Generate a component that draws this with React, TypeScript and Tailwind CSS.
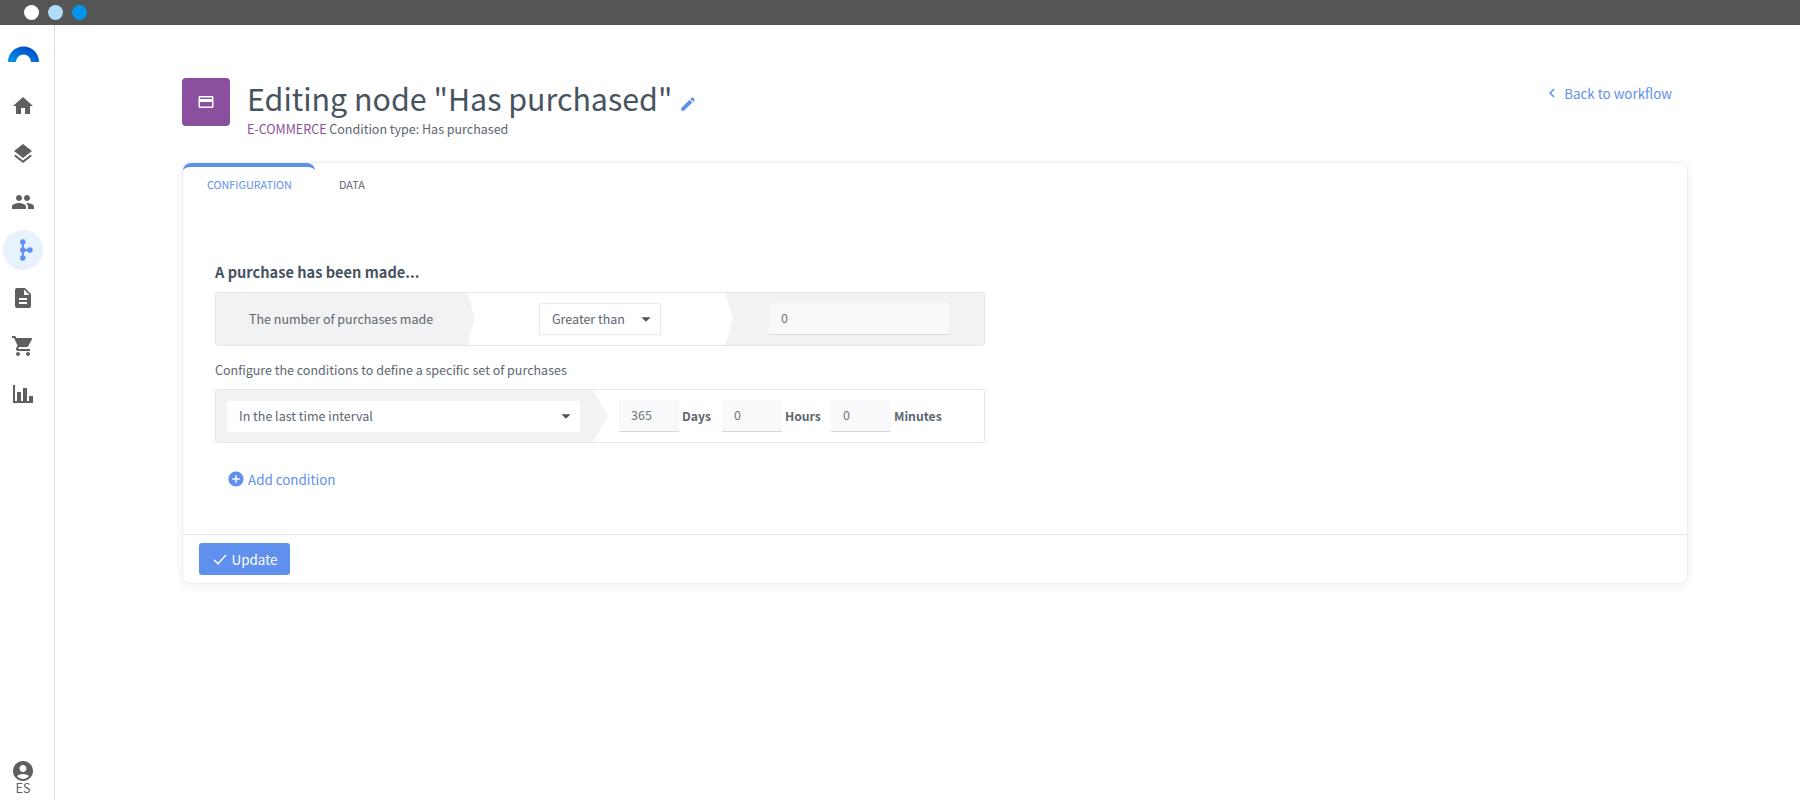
import { MdHome, MdLayers, MdPeople, MdDescription, MdShoppingCart, MdAccountCircle, MdCreditCard, MdEdit, MdAddCircle, MdArrowDropDown, MdChevronLeft } from "react-icons/md";

const font = "[font-family:'Noto_Sans_CJK_SC','Noto_Sans',sans-serif]";

function ChartIcon() {
  return (
    <svg viewBox="0 0 24 24" width="24" height="24" fill="currentColor">
      <path d="M22 21H2V3H4V19H6V10H10V19H12V6H16V19H18V14H22V21Z" />
    </svg>
  );
}

function FlowIcon() {
  return (
    <svg viewBox="0 0 24 24" width="24" height="24" fill="#5f90ee">
      <rect x="10.7" y="3" width="2.2" height="18" />
      <rect x="12" y="11" width="7" height="2.2" />
      <circle cx="11.8" cy="4" r="2.7" />
      <circle cx="11.8" cy="12" r="2.7" />
      <circle cx="11.8" cy="20" r="2.7" />
      <circle cx="19" cy="12" r="2.7" />
    </svg>
  );
}

function Logo() {
  return (
    <svg viewBox="0 0 31 16" width="31" height="16">
      <defs>
        <linearGradient id="lg" x1="0" y1="1" x2="1" y2="0">
          <stop offset="0" stopColor="#009be8" />
          <stop offset="1" stopColor="#0038c4" />
        </linearGradient>
      </defs>
      <path d="M0 16A15.5 15.5 0 0 1 31 16H23A7.5 7.5 0 0 0 8 16Z" fill="url(#lg)" />
    </svg>
  );
}

function NavItem({ children, active }: { children: React.ReactNode; active?: boolean }) {
  return (
    <div className={`flex h-10 w-10 items-center justify-center rounded-full ${active ? "bg-[#e8f2fd]" : ""}`}>
      {children}
    </div>
  );
}

function NumInput({ value, width }: { value: string; width: string }) {
  return (
    <div className={`flex h-8 items-center border-b border-[#d5d9de] bg-[#f8f9fb] pl-3 text-[12.5px] text-[#6c757d] ${width}`}>
      {value}
    </div>
  );
}

export default function App() {
  return (
    <div className={`flex h-screen w-full flex-col overflow-hidden bg-white ${font}`}>
      <div className="flex h-[25px] shrink-0 items-center gap-[9px] bg-[#555555] pl-[24px]">
        <span className="h-[15px] w-[15px] rounded-full bg-white" />
        <span className="h-[15px] w-[15px] rounded-full bg-[#b3dcfa]" />
        <span className="h-[15px] w-[15px] rounded-full bg-[#0095ea]" />
      </div>
      <div className="flex min-h-0 flex-1">
        <aside className="flex w-[55px] shrink-0 flex-col items-center border-r border-[#dcdcdc] pr-[8px] text-[#5f5f5f]">
          <div className="mt-[21px] mb-[24px] h-[16px]"><Logo /></div>
          <div className="flex flex-col gap-2">
            <NavItem><MdHome size={24} /></NavItem>
            <NavItem><MdLayers size={24} /></NavItem>
            <NavItem><MdPeople size={24} /></NavItem>
            <NavItem active><FlowIcon /></NavItem>
            <NavItem><MdDescription size={24} /></NavItem>
            <NavItem><MdShoppingCart size={24} /></NavItem>
            <NavItem><ChartIcon /></NavItem>
          </div>
          <div className="mt-auto mb-[7px] flex flex-col items-center">
            <MdAccountCircle size={24} />
            <span className="text-[12.5px] leading-[10px] text-[#5f5f5f]">ES</span>
          </div>
        </aside>
        <main className="min-w-0 flex-1 pt-[53px] pr-[112px] pl-[127px]">
          <header className="flex h-[84px] items-start">
            <div className="flex h-12 w-12 items-center justify-center rounded-[4px] bg-[#8a4f9e] text-white">
              <MdCreditCard size={18} />
            </div>
            <div className="ml-[17px]">
              <div className="flex h-[40px] items-center text-[#47535f]">
                <h1 className="text-[30.4px] leading-[40px] font-normal">Editing node "Has purchased"</h1>
                <MdEdit size={18} className="mt-[11px] ml-[7px] text-[#5f90ee]" />
              </div>
              <p className="mt-[2px] text-[12.5px] leading-[18px] text-[#5c6670]">
                <span className="text-[#8a4f9e]">E-COMMERCE</span> Condition type: Has purchased
              </p>
            </div>
            <a className="mt-[5px] mr-[16px] ml-auto flex items-center text-[13.4px] leading-5 text-[#5f90ee]">
              <MdChevronLeft size={18} className="mr-[3px]" />
              Back to workflow
            </a>
          </header>

          <section className="h-[422px] rounded-[8px] border border-[#eceef0] bg-white shadow-[0_2px_8px_rgba(0,0,0,0.06)]">
            <div className="flex h-[46px] items-start">
              <div className="flex h-[46px] w-[132px] flex-col rounded-t-[8px] border-t-[4px] border-[#5f90ee] pt-[9px] pl-[24px] text-[10.8px] leading-[16px] text-[#5f90ee]">
                CONFIGURATION
              </div>
              <div className="pt-[13px] pl-[24px] text-[10.8px] leading-[16px] text-[#5c6670]">DATA</div>
            </div>

            <div className="h-[325px] pt-[51px] pl-[32px]">
              <h2 className="text-[14.6px] leading-[24px] font-bold text-[#47535f]">A purchase has been made...</h2>
              <div className="mt-[8px] flex h-[54px] w-[770px] items-center rounded-[3px] border border-[#e4e6e9] text-[12.5px] text-[#5c6670]">
                <div className="flex h-full w-[259px] shrink-0 items-center bg-[#f0f2f4] pl-[33px] [clip-path:polygon(0_0,97%_0,100%_50%,97%_100%,0_100%)]">
                  The number of purchases made
                </div>
                <div className="ml-[64px] flex h-8 w-[122px] shrink-0 items-center justify-between border border-[#e8eaec] pr-[3px] pl-[12px]">
                  Greater than
                  <MdArrowDropDown size={22} className="text-[#47535f]" />
                </div>
                <div className="ml-[64px] flex h-full flex-1 items-center bg-[#f0f2f4] pl-[44px] [clip-path:polygon(0_0,100%_0,100%_100%,0_100%,8px_50%)]">
                  <NumInput value="0" width="w-[180px]" />
                </div>
              </div>

              <p className="mt-[14px] text-[12.5px] leading-[20px] text-[#5c6670]">Configure the conditions to define a specific set of purchases</p>

              <div className="mt-[9px] flex h-[54px] w-[770px] items-center rounded-[3px] border border-[#e4e6e9] text-[12.5px] text-[#5c6670]">
                <div className="flex h-full w-[392px] shrink-0 items-center bg-[#f0f2f4] pl-[11px] [clip-path:polygon(0_0,377px_0,100%_50%,377px_100%,0_100%)]">
                  <div className="flex h-[31px] w-[353px] items-center justify-between bg-white pr-[3px] pl-[12px]">
                    In the last time interval
                    <MdArrowDropDown size={22} className="text-[#47535f]" />
                  </div>
                </div>
                <div className="ml-[11px] flex items-center">
                  <NumInput value="365" width="w-[60px]" />
                  <span className="ml-[3px] w-[40px] text-[12.2px] font-bold">Days</span>
                  <NumInput value="0" width="w-[60px]" />
                  <span className="ml-[3px] w-[46px] text-[12.2px] font-bold">Hours</span>
                  <NumInput value="0" width="w-[60px]" />
                  <span className="ml-[3px] text-[12.2px] font-bold">Minutes</span>
                </div>
              </div>

              <button className="mt-[26px] ml-[12px] flex items-center text-[13.4px] leading-5 text-[#5f90ee]">
                <MdAddCircle size={18} className="mr-[3px]" />
                Add condition
              </button>
            </div>

            <div className="flex h-[49px] items-start border-t border-[#e4e6e9] pt-[8px] pl-[16px]">
              <button className="flex h-8 w-[91px] items-center justify-center rounded-[3px] bg-[#5f90ee] text-[13.4px] text-white">
                <svg viewBox="0 0 24 24" width="16" height="16" fill="none" stroke="currentColor" strokeWidth="2" className="mr-[4px]">
                  <path d="M3 13l6 6L21 6" />
                </svg>
                Update
              </button>
            </div>
          </section>
        </main>
      </div>
    </div>
  );
}
